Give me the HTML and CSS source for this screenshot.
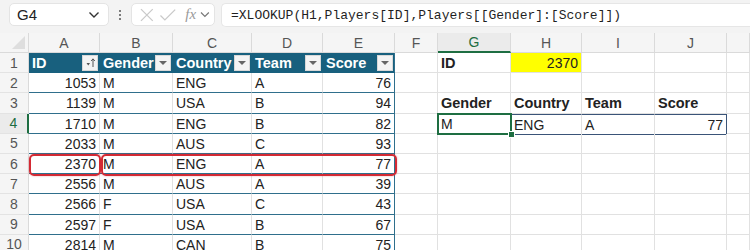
FILE: index.html
```html
<!DOCTYPE html>
<html>
<head>
<meta charset="utf-8">
<link rel="stylesheet" href="styles.css">
</head>
<body>
<div class="app">
  <div class="toolbar">
    <div class="namebox"><span>G4</span>
      <svg class="chev" width="12" height="8" viewBox="0 0 12 8"><path d="M1.5 1.5 L6 6 L10.5 1.5" fill="none" stroke="#333" stroke-width="1.4"/></svg>
    </div>
    <div class="dots"><i></i><i></i><i></i></div>
    <div class="fxbox">
      <svg width="16" height="16" viewBox="0 0 16 16"><path d="M2 2 L14 14 M14 2 L2 14" stroke="#c9c9c9" stroke-width="1.3" fill="none"/></svg>
      <svg width="18" height="16" viewBox="0 0 18 16"><path d="M1.5 8.5 L6 13 L16.5 2.5" stroke="#c9c9c9" stroke-width="1.3" fill="none"/></svg>
      <span class="fx">fx</span>
      <svg width="10" height="7" viewBox="0 0 10 7"><path d="M1 1.5 L5 5.5 L9 1.5" fill="none" stroke="#777" stroke-width="1.2"/></svg>
    </div>
    <div class="formula">=XLOOKUP(H1,Players[ID],Players[[Gender]:[Score]])</div>
  </div>
  <div class="sheet">
    <div class="corner"><span class="tri"></span></div>
    <div class="ch">A</div><div class="ch">B</div><div class="ch">C</div><div class="ch">D</div><div class="ch">E</div><div class="ch">F</div><div class="ch chsel">G</div><div class="ch">H</div><div class="ch">I</div><div class="ch">J</div><div class="ch"></div>

    <div class="rh">1</div>
    <div class="c th"><span>ID</span><span class="fb"><svg width="13" height="13" viewBox="0 0 13 13"><path d="M2.5 7 L6 7 L4.25 9.5 Z" fill="#555"/><path d="M9 11 L9 3 M7.2 5 L9 2.8 L10.8 5" stroke="#555" stroke-width="1" fill="none"/></svg></span></div>
    <div class="c th"><span>Gender</span><span class="fb"><i class="dn"></i></span></div>
    <div class="c th"><span>Country</span><span class="fb"><i class="dn"></i></span></div>
    <div class="c th"><span>Team</span><span class="fb"><i class="dn"></i></span></div>
    <div class="c th te"><span>Score</span><span class="fb"><i class="dn"></i></span></div>
    <div class="c"></div><div class="c b">ID</div><div class="c num yel">2370</div><div class="c"></div><div class="c"></div><div class="c"></div>

    <div class="rh">2</div>
    <div class="c tb num">1053</div><div class="c tb">M</div><div class="c tb">ENG</div><div class="c tb">A</div><div class="c tb te num">76</div>
    <div class="c"></div><div class="c"></div><div class="c"></div><div class="c"></div><div class="c"></div><div class="c"></div>

    <div class="rh">3</div>
    <div class="c tb num">1139</div><div class="c tb">M</div><div class="c tb">USA</div><div class="c tb">B</div><div class="c tb te num">94</div>
    <div class="c"></div><div class="c b sp">Gender</div><div class="c b sp">Country</div><div class="c b sp">Team</div><div class="c b sp">Score</div><div class="c"></div>

    <div class="rh rhsel">4</div>
    <div class="c tb num">1710</div><div class="c tb">M</div><div class="c tb">ENG</div><div class="c tb">B</div><div class="c tb te num">82</div>
    <div class="c"></div><div class="c sp">M</div><div class="c sp sl">ENG</div><div class="c sp sl">A</div><div class="c sp sl spr num">77</div><div class="c"></div>

    <div class="rh">5</div>
    <div class="c tb num">2033</div><div class="c tb">M</div><div class="c tb">AUS</div><div class="c tb">C</div><div class="c tb te num">93</div>
    <div class="c"></div><div class="c"></div><div class="c"></div><div class="c"></div><div class="c"></div><div class="c"></div>

    <div class="rh">6</div>
    <div class="c tb num">2370</div><div class="c tb">M</div><div class="c tb">ENG</div><div class="c tb">A</div><div class="c tb te num">77</div>
    <div class="c"></div><div class="c"></div><div class="c"></div><div class="c"></div><div class="c"></div><div class="c"></div>

    <div class="rh">7</div>
    <div class="c tb num">2556</div><div class="c tb">M</div><div class="c tb">AUS</div><div class="c tb">A</div><div class="c tb te num">39</div>
    <div class="c"></div><div class="c"></div><div class="c"></div><div class="c"></div><div class="c"></div><div class="c"></div>

    <div class="rh">8</div>
    <div class="c tb num">2566</div><div class="c tb">F</div><div class="c tb">USA</div><div class="c tb">C</div><div class="c tb te num">43</div>
    <div class="c"></div><div class="c"></div><div class="c"></div><div class="c"></div><div class="c"></div><div class="c"></div>

    <div class="rh">9</div>
    <div class="c tb num">2597</div><div class="c tb">F</div><div class="c tb">USA</div><div class="c tb">B</div><div class="c tb te num">67</div>
    <div class="c"></div><div class="c"></div><div class="c"></div><div class="c"></div><div class="c"></div><div class="c"></div>

    <div class="rh">10</div>
    <div class="c tb num">2814</div><div class="c tb">M</div><div class="c tb">CAN</div><div class="c tb">B</div><div class="c tb te num">75</div>
    <div class="c"></div><div class="c"></div><div class="c"></div><div class="c"></div><div class="c"></div><div class="c"></div>

    <div class="ring ring-a"></div>
    <div class="ring ring-b"></div>
    <div class="selbox"><span class="handle"></span></div>
  </div>
</div>
</body>
</html>
```
FILE: styles.css
```css
* { box-sizing: border-box; }
html, body { margin: 0; padding: 0; background: #ffffff; }
.app { width: 750px; height: 250px; overflow: hidden; font-family: "Liberation Sans", Arial, sans-serif; color: #222; }

.toolbar {
  height: 33px;
  background: #f3f3f3;
  display: flex;
  align-items: flex-start;
  padding: 3px 0 0 9px;
}
.namebox {
  width: 100px; height: 23px;
  background: #fff;
  border: 1px solid #e4e4e4;
  border-radius: 5px;
  display: flex; align-items: center; justify-content: space-between;
  padding: 0 8px 0 7px;
  font-size: 15px; color: #222;
}
.dots { width: 22px; height: 23px; display: flex; flex-direction: column; align-items: center; justify-content: center; gap: 2px; }
.dots i { width: 2px; height: 2px; background: #555; border-radius: 1px; display: block; }
.fxbox {
  width: 84px; height: 23px;
  background: #fff;
  border: 1px solid #e4e4e4;
  border-radius: 5px;
  display: flex; align-items: center;
  padding: 0 4px 0 7px; gap: 4px;
}
.fx { font-family: "Liberation Serif", "Times New Roman", serif; font-style: italic; font-size: 15px; color: #9a9a9a; margin-left: 5px; }
.formula {
  margin-left: 6px;
  flex: 1;
  height: 24px;
  background: #fff;
  border: 1px solid #e6e6e6;
  border-right: none;
  border-radius: 5px 0 0 5px;
  display: flex; align-items: center;
  padding-left: 9px;
  font-family: "Liberation Mono", "Courier New", monospace;
  font-size: 13px; color: #1f1f1f;
}

.sheet {
  position: relative;
  display: grid;
  grid-template-columns: 29px 71px 73px 79px 71px 72px 43px 73px 71px 73px 72px 1fr;
  grid-template-rows: 20px repeat(10, 20.2px);
  font-size: 14px;
}
.corner { background: #f5f5f5; border-right: 1px solid #dadada; border-bottom: 1px solid #dadada; position: relative; display: flex; align-items: flex-end; justify-content: flex-end; padding: 0 3px 3px 0; }
.tri { width: 0; height: 0; border-left: 13px solid transparent; border-bottom: 13px solid #dedede; }
.ch {
  background: #f5f5f5;
  border-right: 1px solid #dadada;
  border-bottom: 1px solid #dadada;
  color: #555; font-size: 14px;
  display: flex; align-items: center; justify-content: center;
}
.chsel { background: #ebebeb; color: #1e6e42; border-bottom: 2px solid #1e6e42; }
.rh {
  background: #f5f5f5;
  border-right: 1px solid #dadada;
  border-bottom: 1px solid #e3e3e3;
  color: #555; font-size: 14px;
  display: flex; align-items: center; justify-content: center;
}
.rhsel { color: #1e6e42; background: #ebebeb; border-right: 2px solid #1e6e42; }

.c {
  border-right: 1px solid #e1e1e1;
  border-bottom: 1px solid #e1e1e1;
  display: flex; align-items: center;
  padding: 1px 3px 0 3px;
  white-space: nowrap; overflow: hidden;
}
.num { justify-content: flex-end; }
.b { font-weight: bold; font-size: 14.5px; }
.yel { background: #ffff00; }

.th {
  background: #18607e;
  color: #fff;
  font-weight: bold; font-size: 14.5px;
  border-right: 1px solid #18607e;
  border-bottom: 1px solid #18607e;
  justify-content: space-between;
  padding: 0 1px 0 3px;
}
.fb {
  width: 16px; height: 16px;
  background: #f4f4f4;
  border: 1px solid #d8d8d8;
  display: flex; align-items: center; justify-content: center;
}
.dn { width: 0; height: 0; border-left: 4px solid transparent; border-right: 4px solid transparent; border-top: 4px solid #666; display: block; margin-top: 1px; }

.tb { border-bottom: 1px solid #2f6f8c; }
.te { border-right: 1px solid #2f6f8c; }

.sp { border-bottom: 1px solid #e1e1e1; }
.sl { border-top: 1px solid #3a5478; border-bottom: 1px solid #3a5478; margin-bottom: -1px; }
.spr { border-right: 1px solid #3a5478; }

.ring {
  position: absolute;
  border: 2px solid #d42a34;
  border-radius: 5px;
  box-shadow: 0 0 2px rgba(212, 42, 52, 0.45);
  pointer-events: none;
}
.ring-a { left: 29px; top: 121px; width: 72px; height: 22px; }
.ring-b { left: 101px; top: 121px; width: 296px; height: 22px; }

.selbox {
  position: absolute;
  left: 437px; top: 80px;
  width: 75px; height: 22px;
  border: 2px solid #1e6e42;
  pointer-events: none;
}
.handle {
  position: absolute;
  right: -5px; bottom: -5px;
  width: 7px; height: 7px;
  background: #1e6e42;
  border: 1px solid #fff;
}
```
